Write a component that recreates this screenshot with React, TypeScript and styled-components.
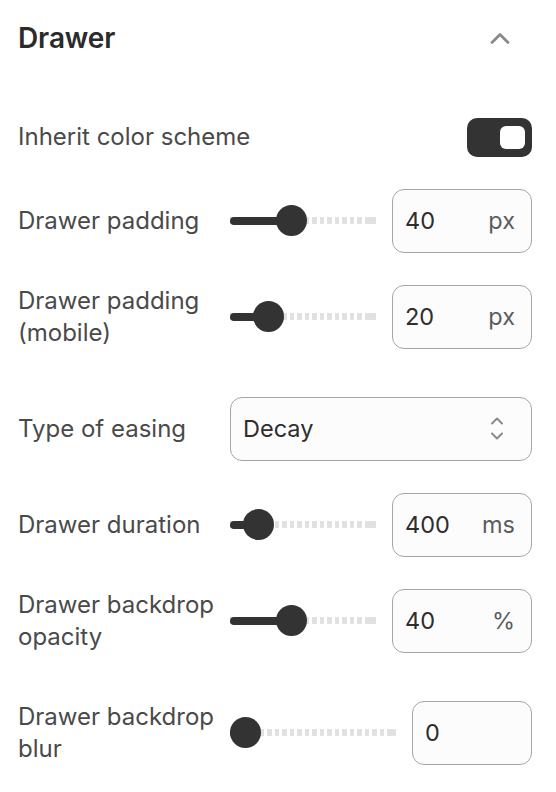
import React from "react";
import styled, { createGlobalStyle } from "styled-components";

const Global = createGlobalStyle`
  html, body { margin: 0; padding: 0; background: #ffffff; }
  body { font-family: Inter, "Noto Sans", "Liberation Sans", sans-serif; }
  * { box-sizing: border-box; }
`;

const Panel = styled.div`
  width: 556px;
  padding: 0 24px 0 18px;
  display: flex;
  flex-direction: column;
`;

const Header = styled.div`
  height: 76px;
  display: flex;
  align-items: center;
  justify-content: space-between;
`;

const Title = styled.h2`
  margin: 0;
  font-size: 28px;
  font-weight: 600;
  color: #2b2b2b;
  letter-spacing: -0.1px;
`;

const Collapse = styled.button`
  border: 0;
  background: none;
  padding: 0;
  margin-right: 22px;
  width: 20px;
  height: 12px;
  display: flex;
  cursor: pointer;
`;

const List = styled.div`
  padding-top: 41.5px;
  display: flex;
  flex-direction: column;
  gap: 32px;
`;

const ToggleRow = styled.div`
  display: flex;
  align-items: center;
  justify-content: space-between;
  height: 39px;
`;

const Row = styled.div<{ $extra?: boolean }>`
  display: flex;
  align-items: center;
  margin-bottom: ${(p) => (p.$extra ? "16px" : "0")};
`;

const Label = styled.div`
  width: 200px;
  flex: none;
  margin-right: 12px;
  font-size: 24px;
  line-height: 32px;
  color: #4a4a4a;
`;

const WideLabel = styled(Label)`
  width: auto;
`;

const Toggle = styled.button`
  width: 65px;
  height: 39px;
  border: 0;
  border-radius: 10px;
  background: #333333;
  padding: 0 7px 0 0;
  display: flex;
  align-items: center;
  justify-content: flex-end;
  cursor: pointer;
`;

const Knob = styled.span`
  width: 25px;
  height: 23px;
  border-radius: 6px;
  background: #ffffff;
`;

const Slider = styled.div`
  position: relative;
  flex: 1;
  height: 31px;
  margin-right: 16px;
`;

const Dashes = styled.div`
  position: absolute;
  left: 0;
  right: 0;
  top: 12px;
  height: 7px;
  background: repeating-linear-gradient(
    to right,
    #e1e1e1 0,
    #e1e1e1 4.5px,
    transparent 4.5px,
    transparent 7.5px
  );
  &::after {
    content: "";
    position: absolute;
    right: 0;
    top: 0;
    width: 9px;
    height: 7px;
    border-radius: 0 4px 4px 0;
    background: #e1e1e1;
  }
`;

const Fill = styled.div`
  position: absolute;
  left: 0;
  top: 11.5px;
  height: 8px;
  border-radius: 4px;
  background: #333333;
`;

const Thumb = styled.div`
  position: absolute;
  top: 0;
  width: 31px;
  height: 31px;
  border-radius: 50%;
  background: #333333;
`;

const Field = styled.div<{ $w: number }>`
  width: ${(p) => p.$w}px;
  height: 64px;
  flex: none;
  border: 1px solid #a6a6a6;
  border-radius: 12px;
  background: #fcfcfc;
  display: flex;
  align-items: center;
  justify-content: space-between;
  padding: 0 16px 0 12px;
  font-size: 23.5px;
`;

const Value = styled.span`
  color: #2e2e2e;
`;

const Unit = styled.span`
  color: #5c5c5c;
`;

const Select = styled.div`
  flex: 1;
  height: 64px;
  border: 1px solid #a6a6a6;
  border-radius: 12px;
  background: #fcfcfc;
  display: flex;
  align-items: center;
  justify-content: space-between;
  padding: 0 27px 0 12px;
  font-size: 23.5px;
  color: #2e2e2e;
`;

const ChevronUp = () => (
  <svg width="20" height="12" viewBox="0 0 20 12" fill="none">
    <path d="M2 10.5 L10 2.5 L18 10.5" stroke="#8a8a8a" strokeWidth="2.8" strokeLinecap="round" strokeLinejoin="round" />
  </svg>
);

const UpDown = () => (
  <svg width="14" height="28" viewBox="0 0 14 28" fill="none">
    <path d="M2 8.5 L7 3.5 L12 8.5" stroke="#8a8a8a" strokeWidth="2" strokeLinecap="round" strokeLinejoin="round" />
    <path d="M2 18.5 L7 23.5 L12 18.5" stroke="#8a8a8a" strokeWidth="2" strokeLinecap="round" strokeLinejoin="round" />
  </svg>
);

const Range = ({ f }: { f: number }) => (
  <Slider>
    <Dashes />
    <Fill style={{ width: `calc(15.5px + ${f} * (100% - 31px))` }} />
    <Thumb style={{ left: `calc(${f} * (100% - 31px))` }} />
  </Slider>
);

type NumRow = { label: React.ReactNode; f: number; value: string; unit?: string; w: number; extra?: boolean };

const NumberRow = ({ label, f, value, unit, w, extra }: NumRow) => (
  <Row $extra={extra}>
    <Label>{label}</Label>
    <Range f={f} />
    <Field $w={w}>
      <Value>{value}</Value>
      {unit ? <Unit>{unit}</Unit> : null}
    </Field>
  </Row>
);

export default function App() {
  return (
    <>
      <Global />
      <Panel>
        <Header>
          <Title>Drawer</Title>
          <Collapse aria-label="Collapse">
            <ChevronUp />
          </Collapse>
        </Header>
        <List>
          <ToggleRow>
            <WideLabel>Inherit color scheme</WideLabel>
            <Toggle aria-label="Inherit color scheme">
              <Knob />
            </Toggle>
          </ToggleRow>
          <NumberRow label="Drawer padding" f={0.4} value="40" unit="px" w={140} />
          <NumberRow label={<>Drawer padding<br />(mobile)</>} f={0.2} value="20" unit="px" w={140} extra />
          <Row>
            <Label>Type of easing</Label>
            <Select>
              <span>Decay</span>
              <UpDown />
            </Select>
          </Row>
          <NumberRow label="Drawer duration" f={0.11} value="400" unit="ms" w={140} />
          <NumberRow label={<>Drawer backdrop<br />opacity</>} f={0.4} value="40" unit="%" w={140} extra />
          <NumberRow label={<>Drawer backdrop<br />blur</>} f={0} value="0" w={120} />
        </List>
      </Panel>
    </>
  );
}
